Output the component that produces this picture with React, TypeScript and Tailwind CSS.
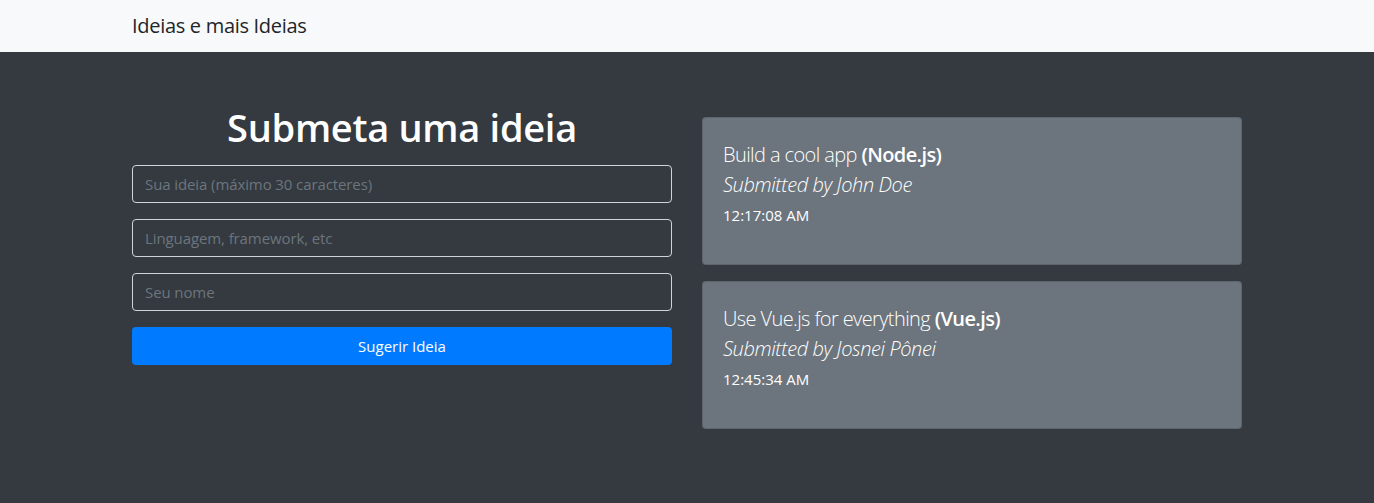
import React from "react";

const font = { fontFamily: '"Open Sans", "Noto Sans", sans-serif' };

function IdeaCard({ title, lang, author, time }: { title: string; lang: string; author: string; time: string }) {
  return (
    <div className="h-[148px] rounded-[4px] border border-[rgba(0,0,0,0.125)] bg-[#6c757d] px-5 pt-[22px] text-white">
      <p className="text-[20px] leading-[30px] font-light tracking-[-0.6px]">
        {title} <span className="font-semibold">({lang})</span>
      </p>
      <p className="text-[20px] leading-[30px] font-light italic tracking-[-0.4px]">Submitted by {author}</p>
      <p className="mt-[3px] text-[15px] leading-[24px]">{time}</p>
    </div>
  );
}

const inputCls =
  "mb-4 h-[38px] rounded-[4px] border border-[#ced4da] bg-transparent px-3 text-[15px] tracking-[-0.1px] text-white outline-none placeholder:text-[#6c757d]";

export default function App() {
  return (
    <div style={font} className="min-h-[503px] bg-[#343a40]">
      <nav className="h-[52px] bg-[#f8f9fa]">
        <div className="mx-auto flex h-full w-[1140px] items-center px-[15px]">
          <span className="text-[20px] leading-[30px] tracking-[-0.3px] text-[#212529]">Ideias e mais Ideias</span>
        </div>
      </nav>
      <main className="mx-auto grid w-[1140px] grid-cols-2 gap-[30px] px-[15px] pt-[51px]">
        <div className="flex flex-col">
          <h1 className="mb-[14px] text-center text-[38px] leading-[48px] font-semibold tracking-[-0.3px] text-white">
            Submeta uma ideia
          </h1>
          <input className={inputCls} placeholder="Sua ideia (máximo 30 caracteres)" />
          <input className={inputCls} placeholder="Linguagem, framework, etc" />
          <input className={inputCls} placeholder="Seu nome" />
          <button className="h-[38px] rounded-[4px] bg-[#007bff] text-[15px] text-white">Sugerir Ideia</button>
        </div>
        <div className="flex flex-col gap-4 pt-[14px]">
          <IdeaCard title="Build a cool app" lang="Node.js" author="John Doe" time="12:17:08 AM" />
          <IdeaCard title="Use Vue.js for everything" lang="Vue.js" author="Josnei Pônei" time="12:45:34 AM" />
        </div>
      </main>
    </div>
  );
}
